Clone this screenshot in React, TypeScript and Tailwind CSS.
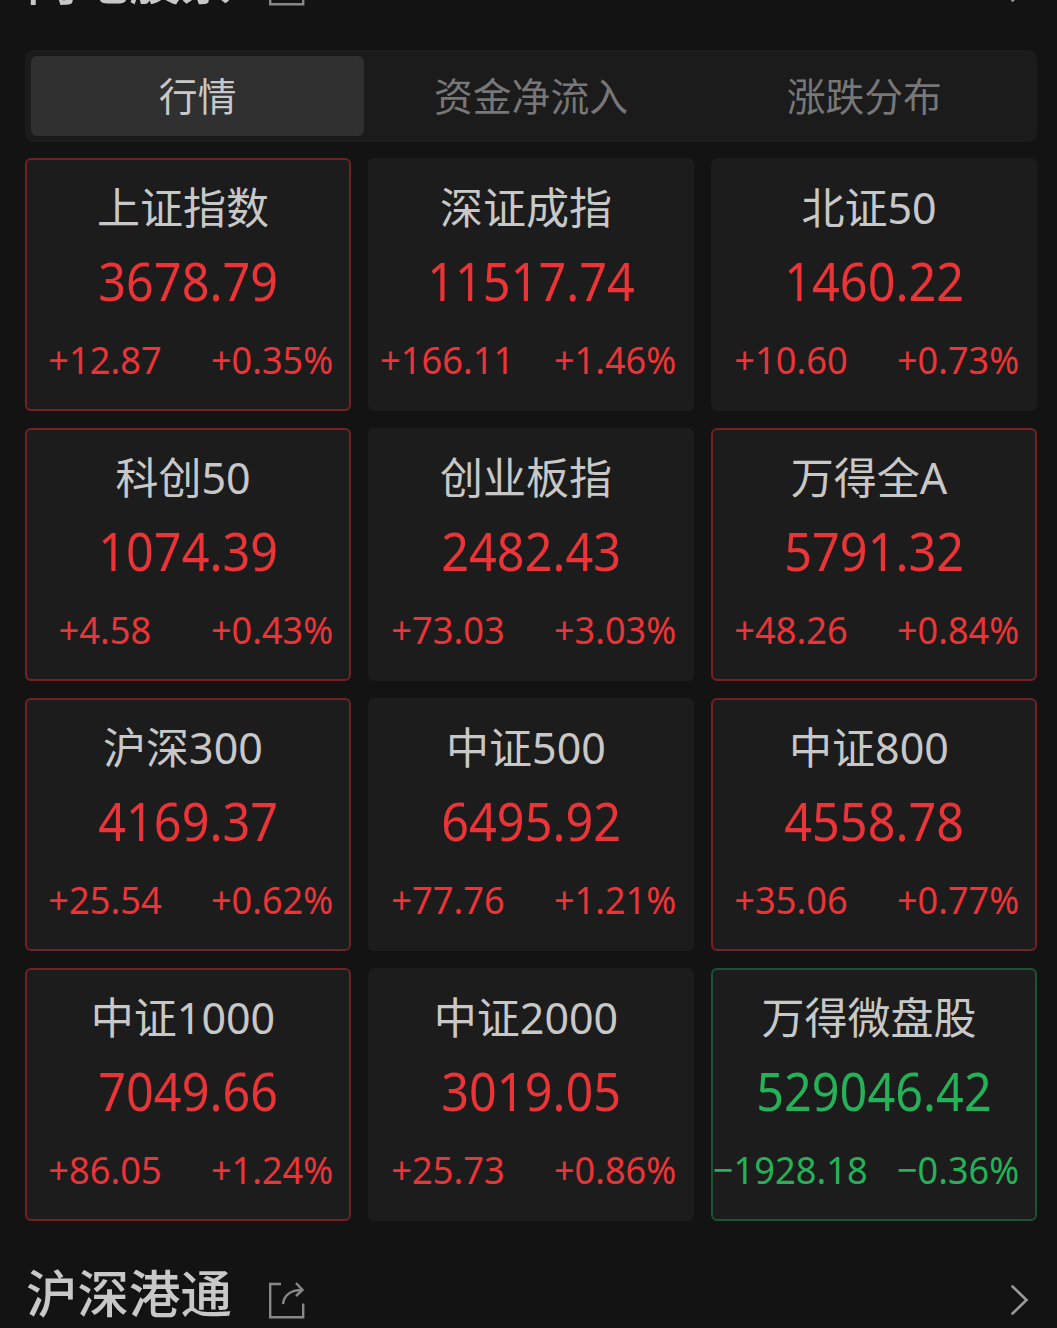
import clsx from 'clsx'

type Quote = {
  name: string
  price: string
  change: string
  percent: string
  framed?: boolean
}

const tabs = ['行情', '资金净流入', '涨跌分布']

const quotes: Quote[] = [
  { name: '上证指数', price: '3678.79', change: '+12.87', percent: '+0.35%', framed: true },
  { name: '深证成指', price: '11517.74', change: '+166.11', percent: '+1.46%' },
  { name: '北证50', price: '1460.22', change: '+10.60', percent: '+0.73%' },
  { name: '科创50', price: '1074.39', change: '+4.58', percent: '+0.43%', framed: true },
  { name: '创业板指', price: '2482.43', change: '+73.03', percent: '+3.03%' },
  { name: '万得全A', price: '5791.32', change: '+48.26', percent: '+0.84%', framed: true },
  { name: '沪深300', price: '4169.37', change: '+25.54', percent: '+0.62%', framed: true },
  { name: '中证500', price: '6495.92', change: '+77.76', percent: '+1.21%' },
  { name: '中证800', price: '4558.78', change: '+35.06', percent: '+0.77%', framed: true },
  { name: '中证1000', price: '7049.66', change: '+86.05', percent: '+1.24%', framed: true },
  { name: '中证2000', price: '3019.05', change: '+25.73', percent: '+0.86%' },
  { name: '万得微盘股', price: '529046.42', change: '−1928.18', percent: '−0.36%', framed: true },
]

function ShareIcon() {
  return (
    <svg width="38" height="38" viewBox="0 0 38 38" fill="none" stroke="#888" strokeWidth="2.4">
      <path d="M13 3H2.200v33.200h33V22.500" />
      <path d="M15 23c1-8 7-14 19-14M28 2 34.500 9l-6.500 6" />
    </svg>
  )
}

function SectionHeader({ title }: { title: string }) {
  return (
    <header className="flex h-[78px] items-center pl-[26px] pr-7">
      <h2 className="text-[51.500px] leading-[78px] font-medium text-[#c8c8c8]">{title}</h2>
      <span className="ml-9 mt-[13px]">
        <ShareIcon />
      </span>
      <svg className="ml-auto mt-3.5" width="20" height="32" viewBox="0 0 20 32" fill="none" stroke="#999" strokeWidth="2.600" strokeLinecap="round">
        <path d="M3.500 2.500 17.500 16 3.500 29.500" />
      </svg>
    </header>
  )
}

function QuoteCard({ quote }: { quote: Quote }) {
  const down = quote.change.startsWith('−')
  return (
    <div
      className={clsx(
        'h-[253px] rounded-md border-2 bg-[#1c1c1c]',
        down ? 'text-[#25b158]' : 'text-[#ea3438]',
        !quote.framed && 'border-transparent',
        quote.framed && (down ? 'border-[#1c5433]' : 'border-[#762023]'),
      )}
    >
      <div className="mt-[18px] pr-2.5 text-center text-[43px] leading-[60px] whitespace-nowrap text-[#c8c8c8]">
        {quote.name}
      </div>
      <div className="mt-[11px] flex justify-center text-[52px] leading-[64px]">
        <span className="scale-x-[0.935] whitespace-nowrap">{quote.price}</span>
      </div>
      <div className="-mx-0.5 mt-[21px] grid grid-cols-2 gap-2 text-[39px] leading-[50px]">
        <span className="flex justify-center">
          <span className="shrink-0 scale-x-[0.93] whitespace-nowrap">{quote.change}</span>
        </span>
        <span className="flex justify-center pl-0.5">
          <span className="shrink-0 scale-x-[0.925] whitespace-nowrap">{quote.percent}</span>
        </span>
      </div>
    </div>
  )
}

export default function App() {
  return (
    <div className="h-[1328px] w-[1057px] overflow-hidden bg-[#131313] font-['Noto_Sans','Noto_Sans_CJK_SC',sans-serif]">
      <div className="-mt-[59px]">
        <SectionHeader title="内地股票" />
      </div>

      <nav className="mr-5 ml-[25px] mt-[31px] grid h-[92px] grid-cols-3 rounded-lg bg-[#1b1b1b] p-1.5">
        {tabs.map((tab, i) => (
          <button
            key={tab}
            type="button"
            className={clsx(
              'rounded-md text-[38.800px] leading-[80px]',
              i === 0 ? 'bg-[#303030] text-[#c8c8c8]' : 'text-[#777]',
            )}
          >
            {tab}
          </button>
        ))}
      </nav>

      <main className="mr-5 ml-[25px] mt-4 grid grid-cols-3 gap-[17px]">
        {quotes.map((quote) => (
          <QuoteCard key={quote.name} quote={quote} />
        ))}
      </main>

      <div className="mt-[33px]">
        <SectionHeader title="沪深港通" />
      </div>
    </div>
  )
}
